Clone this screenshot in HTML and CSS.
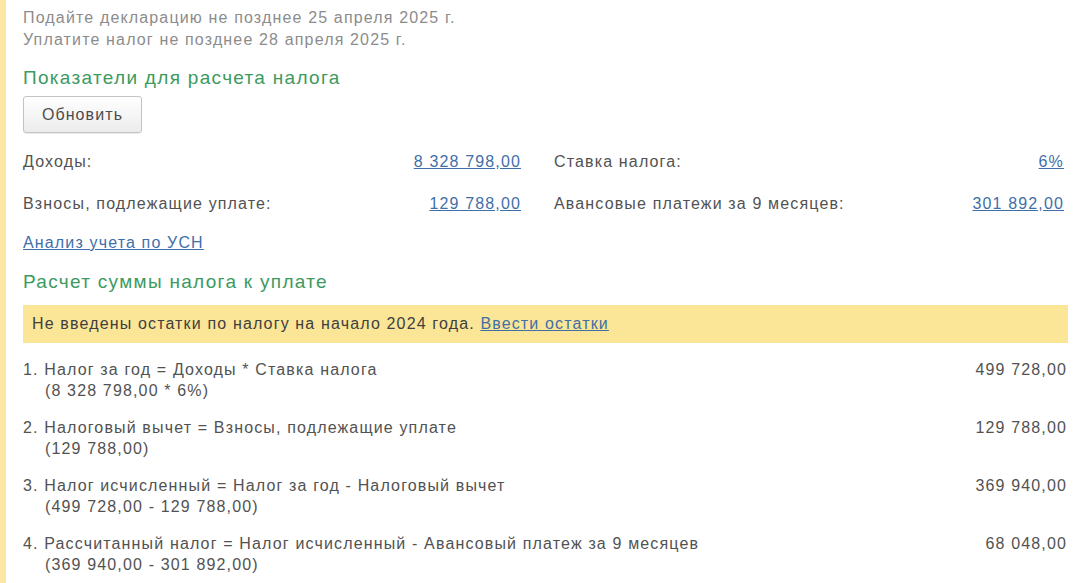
FILE: index.html
```html
<!DOCTYPE html>
<html>
<head>
    <title>Расчет налога УСН</title>
    <link rel="stylesheet" href="styles.css">
</head>
<body>
<div class="page">
    <div class="notes">
        <div>Подайте декларацию не позднее 25 апреля 2025 г.</div>
        <div>Уплатите налог не позднее 28 апреля 2025 г.</div>
    </div>

    <h2 class="section-title">Показатели для расчета налога</h2>
    <button class="btn">Обновить</button>

    <div class="fields">
        <div class="field">
            <span class="label">Доходы:</span>
            <a href="#" class="value-link">8 328 798,00</a>
        </div>
        <div class="field">
            <span class="label">Ставка налога:</span>
            <a href="#" class="value-link">6%</a>
        </div>
        <div class="field">
            <span class="label">Взносы, подлежащие уплате:</span>
            <a href="#" class="value-link">129 788,00</a>
        </div>
        <div class="field">
            <span class="label">Авансовые платежи за 9 месяцев:</span>
            <a href="#" class="value-link">301 892,00</a>
        </div>
    </div>

    <a href="#" class="analysis-link">Анализ учета по УСН</a>

    <h2 class="section-title second">Расчет суммы налога к уплате</h2>

    <div class="warning">
        Не введены остатки по налогу на начало 2024 года. <a href="#" class="value-link">Ввести остатки</a>
    </div>

    <div class="calc">
        <div class="calc-row">
            <div class="calc-text">
                <div>1. Налог за год = Доходы * Ставка налога</div>
                <div class="calc-detail">(8 328 798,00 * 6%)</div>
            </div>
            <div class="calc-sum">499 728,00</div>
        </div>
        <div class="calc-row">
            <div class="calc-text">
                <div>2. Налоговый вычет = Взносы, подлежащие уплате</div>
                <div class="calc-detail">(129 788,00)</div>
            </div>
            <div class="calc-sum">129 788,00</div>
        </div>
        <div class="calc-row">
            <div class="calc-text">
                <div>3. Налог исчисленный = Налог за год - Налоговый вычет</div>
                <div class="calc-detail">(499 728,00 - 129 788,00)</div>
            </div>
            <div class="calc-sum">369 940,00</div>
        </div>
        <div class="calc-row">
            <div class="calc-text">
                <div>4. Рассчитанный налог = Налог исчисленный - Авансовый платеж за 9 месяцев</div>
                <div class="calc-detail">(369 940,00 - 301 892,00)</div>
            </div>
            <div class="calc-sum">68 048,00</div>
        </div>
    </div>
</div>
</body>
</html>
```

FILE: styles.css
```css
html, body {
    margin: 0;
    height: 100%;
}

body {
    background-color: #fff;
    border-left: 6px solid #f9e7a3;
    box-sizing: border-box;
    font-family: "Liberation Sans", Arial, sans-serif;
    font-size: 16px;
    letter-spacing: 1.15px;
    color: #525252;
    overflow: hidden;
}

.page {
    padding: 7px 12px 0 17px;
}

.notes {
    color: #8c8c8c;
    line-height: 22px;
}

.section-title {
    margin: 15px 0 6px;
    font-size: 19px;
    letter-spacing: 1.3px;
    font-weight: normal;
    line-height: 24px;
    color: #3d9a60;
}

.btn {
    display: block;
    height: 37px;
    width: 119px;
    padding: 0;
    font-family: inherit;
    font-size: 16px;
    letter-spacing: 1.1px;
    color: #4d4d4d;
    background: linear-gradient(#ffffff, #ececec);
    border: 1px solid #c4c4c4;
    border-radius: 3px;
    box-shadow: 0 1px 1px rgba(0, 0, 0, 0.08);
}

.fields {
    display: grid;
    grid-template-columns: 498px 510px;
    column-gap: 33px;
    row-gap: 21px;
    margin-top: 18px;
}

.field {
    display: flex;
    justify-content: space-between;
    line-height: 21px;
}

.value-link, .analysis-link {
    color: #3f6fa8;
    text-decoration: underline;
}

.analysis-link {
    display: inline-block;
    margin-top: 18px;
    line-height: 21px;
}

.section-title.second {
    margin: 17px 0 11px;
}

.warning {
    background-color: #fbe596;
    height: 38px;
    line-height: 38px;
    padding-left: 9px;
    color: #404040;
}

.calc {
    margin-top: 16px;
}

.calc-row {
    display: flex;
    justify-content: space-between;
    line-height: 21px;
    margin-bottom: 16px;
}

.calc-detail {
    padding-left: 22px;
}

.calc-sum {
    padding-right: 1px;
}
```
